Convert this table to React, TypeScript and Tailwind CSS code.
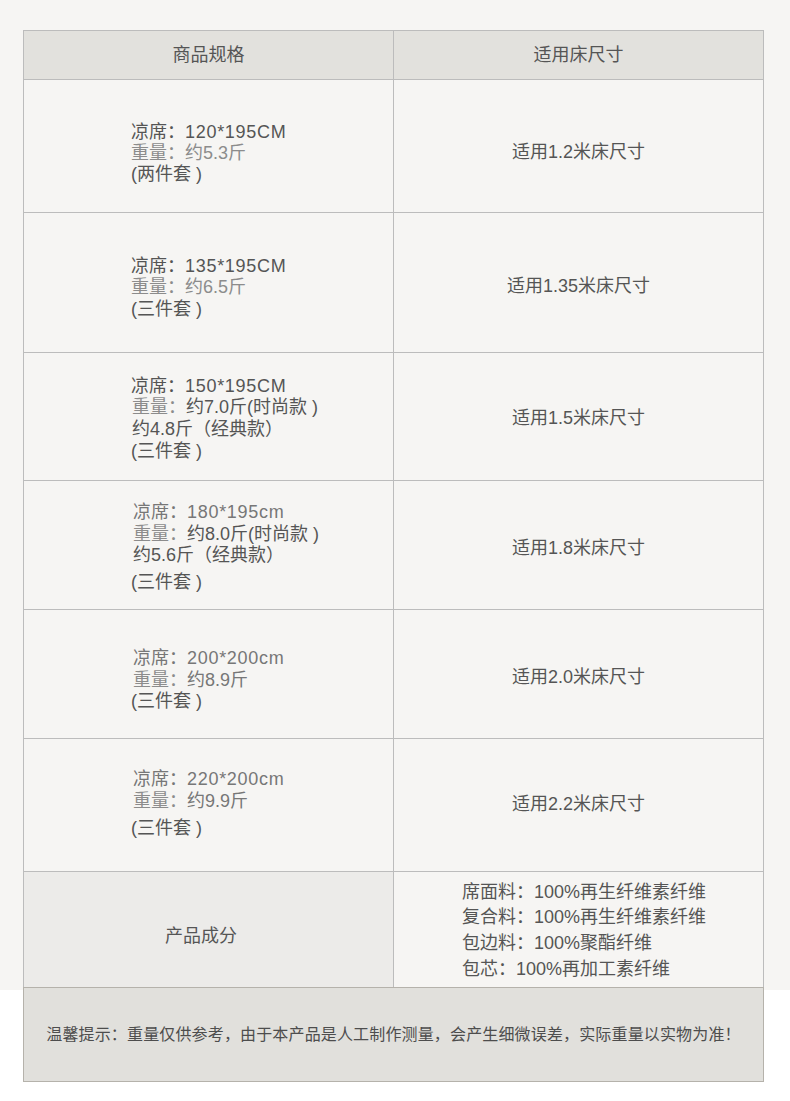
import React from "react";

const DARK = "text-[#555555]";
const MID = "text-[#777777]";
const LIGHT = "text-[#8c8c8c]";
const NUM = "tracking-[0.7px]";

type Seg = { t: string; c: string };
type Line = { segs: Seg[]; cls?: string };
type Row = {
  h: string;
  leftPad: string;
  rightPad: string;
  leading: string;
  lines: Line[];
  right: string;
};

const rows: Row[] = [
  {
    h: "h-[133px]",
    leftPad: "pt-[15px]",
    rightPad: "pt-[13px]",
    leading: "leading-[21px]",
    lines: [
      {
        segs: [
          { t: "凉席：", c: DARK },
          { t: "120*195CM", c: `${DARK} ${NUM}` },
        ],
      },
      { segs: [{ t: "重量：约5.3斤", c: LIGHT }] },
      { segs: [{ t: "(两件套 )", c: DARK }] },
    ],
    right: "适用1.2米床尺寸",
  },
  {
    h: "h-[140px]",
    leftPad: "pt-[11px]",
    rightPad: "pt-[8px]",
    leading: "leading-[21.5px]",
    lines: [
      {
        segs: [
          { t: "凉席：", c: DARK },
          { t: "135*195CM", c: `${DARK} ${NUM}` },
        ],
      },
      { segs: [{ t: "重量：约6.5斤", c: LIGHT }] },
      { segs: [{ t: "(三件套 )", c: DARK }] },
    ],
    right: "适用1.35米床尺寸",
  },
  {
    h: "h-[128px]",
    leftPad: "pt-[5px]",
    rightPad: "pt-[4px]",
    leading: "leading-[21.7px]",
    lines: [
      {
        segs: [
          { t: "凉席：", c: DARK },
          { t: "150*195CM", c: `${DARK} ${NUM}` },
        ],
      },
      {
        segs: [
          { t: "重量：", c: LIGHT },
          { t: "约7.0斤(时尚款 )", c: DARK },
        ],
        cls: "ml-[1px]",
      },
      { segs: [{ t: "约4.8斤（经典款）", c: DARK }], cls: "ml-[1px]" },
      { segs: [{ t: "(三件套 )", c: DARK }] },
    ],
    right: "适用1.5米床尺寸",
  },
  {
    h: "h-[129px]",
    leftPad: "pt-[5px]",
    rightPad: "pt-[7px]",
    leading: "leading-[21.5px]",
    lines: [
      {
        segs: [
          { t: "凉席：", c: MID },
          { t: "180*195cm", c: `${MID} ${NUM}` },
        ],
        cls: "ml-[2px]",
      },
      {
        segs: [
          { t: "重量：", c: LIGHT },
          { t: "约8.0斤(时尚款 )", c: DARK },
        ],
        cls: "ml-[2px]",
      },
      { segs: [{ t: "约5.6斤（经典款）", c: DARK }], cls: "ml-[2px]" },
      { segs: [{ t: "(三件套 )", c: DARK }], cls: "mt-[5px]" },
    ],
    right: "适用1.8米床尺寸",
  },
  {
    h: "h-[129px]",
    leftPad: "pt-[13px]",
    rightPad: "pt-[7px]",
    leading: "leading-[21.5px]",
    lines: [
      {
        segs: [
          { t: "凉席：", c: MID },
          { t: "200*200cm", c: `${MID} ${NUM}` },
        ],
        cls: "ml-[2px]",
      },
      {
        segs: [
          { t: "重量：", c: LIGHT },
          { t: "约8.9斤", c: MID },
        ],
        cls: "ml-[2px]",
      },
      { segs: [{ t: "(三件套 )", c: DARK }] },
    ],
    right: "适用2.0米床尺寸",
  },
  {
    h: "h-[133px]",
    leftPad: "pb-[3px]",
    rightPad: "pb-[1px]",
    leading: "leading-[22px]",
    lines: [
      {
        segs: [
          { t: "凉席：", c: MID },
          { t: "220*200cm", c: `${MID} ${NUM}` },
        ],
        cls: "ml-[2px]",
      },
      {
        segs: [
          { t: "重量：", c: LIGHT },
          { t: "约9.9斤", c: MID },
        ],
        cls: "ml-[2px]",
      },
      { segs: [{ t: "(三件套 )", c: DARK }], cls: "mt-[5px]" },
    ],
    right: "适用2.2米床尺寸",
  },
];

const FONT = "font-['Liberation_Sans','Noto_Sans_CJK_SC',sans-serif]";

export default function App() {
  return (
    <div className={`w-[790px] min-h-[1101px] bg-white ${FONT}`}>
      <div className="bg-[#f6f5f3] pt-[30px] pb-[3px]">
        <div className="ml-[23px] w-[741px] border-x border-t border-[#bcbcbc]">
          {/* header */}
          <div className="flex h-[49px] border-b border-[#bcbcbc] bg-[#e2e1dd] text-[18px] text-[#555555]">
            <div className="flex w-[370px] items-center justify-center border-r border-[#bcbcbc]">
              商品规格
            </div>
            <div className="flex flex-1 items-center justify-center">适用床尺寸</div>
          </div>

          {rows.map((r, i) => (
            <div key={i} className={`flex ${r.h} border-b border-[#bcbcbc] text-[18px]`}>
              <div
                className={`flex w-[370px] items-center border-r border-[#bcbcbc] pl-[107px] ${r.leftPad}`}
              >
                <div className={`flex flex-col ${r.leading}`}>
                  {r.lines.map((l, j) => (
                    <div key={j} className={`whitespace-pre ${l.cls ?? ""}`}>
                      {l.segs.map((s, k) => (
                        <span key={k} className={s.c}>
                          {s.t}
                        </span>
                      ))}
                    </div>
                  ))}
                </div>
              </div>
              <div
                className={`flex flex-1 items-center justify-center text-[#555555] ${r.rightPad}`}
              >
                {r.right}
              </div>
            </div>
          ))}

          {/* composition */}
          <div className="flex h-[115px] text-[18px] text-[#555555]">
            <div className="flex w-[370px] items-center justify-center border-r border-[#bcbcbc] bg-[#ecebe9] pr-[15px] pt-[14px]">
              产品成分
            </div>
            <div className="flex flex-1 items-center pl-[68px] pt-[3px]">
              <div className="flex flex-col leading-[25.7px]">
                <div>席面料：100%再生纤维素纤维</div>
                <div>复合料：100%再生纤维素纤维</div>
                <div>包边料：100%聚酯纤维</div>
                <div>包芯：100%再加工素纤维</div>
              </div>
            </div>
          </div>
        </div>
      </div>

      <div className="relative -mt-[3px] ml-[23px] flex h-[95px] w-[741px] items-center justify-center border border-[#b5b2ab] bg-[#e1e0dc] text-[16px] tracking-[0.15px] text-[#4d4d4d]">
        温馨提示：重量仅供参考，由于本产品是人工制作测量，会产生细微误差，实际重量以实物为准！
      </div>
    </div>
  );
}
